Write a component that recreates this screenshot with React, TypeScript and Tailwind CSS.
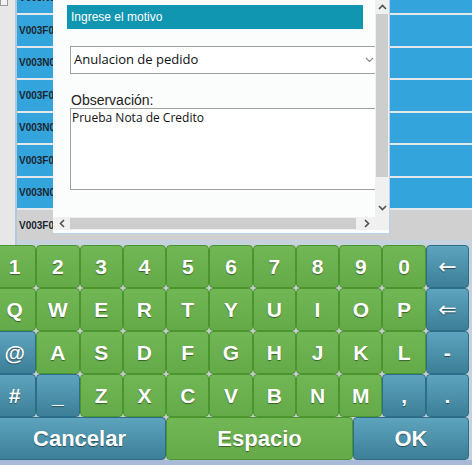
import React from 'react';

type KeyKind = 'g' | 't';

const greenKey = 'bg-linear-to-b from-[#71b755] to-[#65aa48] border-[#4b952f]';
const tealKey = 'bg-linear-to-b from-[#5ea4be] to-[#3c7f97] border-[#2c6e8a]';

const Key: React.FC<{ label: string; kind: KeyKind; className?: string; labelClass?: string }> = ({ label, kind, className = '', labelClass = '' }) => (
    <div
        className={`h-[43px] flex items-center justify-center rounded-[4px] border text-white font-bold text-[21px] [text-shadow:0_1px_1px_rgba(0,0,0,0.45)] ${kind === 'g' ? greenKey : tealKey} ${className}`}
    >
        <span className={labelClass}>{label}</span>
    </div>
);

const rows: [string, KeyKind][][] = [
    [['1', 'g'], ['2', 'g'], ['3', 'g'], ['4', 'g'], ['5', 'g'], ['6', 'g'], ['7', 'g'], ['8', 'g'], ['9', 'g'], ['0', 'g'], ['←', 't']],
    [['Q', 'g'], ['W', 'g'], ['E', 'g'], ['R', 'g'], ['T', 'g'], ['Y', 'g'], ['U', 'g'], ['I', 'g'], ['O', 'g'], ['P', 'g'], ['⇐', 't']],
    [['@', 't'], ['A', 'g'], ['S', 'g'], ['D', 'g'], ['F', 'g'], ['G', 'g'], ['H', 'g'], ['J', 'g'], ['K', 'g'], ['L', 'g'], ['-', 't']],
    [['#', 't'], ['_', 't'], ['Z', 'g'], ['X', 'g'], ['C', 'g'], ['V', 'g'], ['B', 'g'], ['N', 'g'], ['M', 'g'], [',', 't'], ['.', 't']],
];

const codes = ['V003N0012', 'V003F0012', 'V003N0013', 'V003F0013', 'V003N0014', 'V003F0014', 'V003N0015', 'V003F0015'];

const Chevron: React.FC<{ dir: 'up' | 'down' | 'left' | 'right' }> = ({ dir }) => {
    const pts = {
        up: '1,6 4.5,2.5 8,6',
        down: '1,3 4.5,6.5 8,3',
        left: '6,1 2.5,4.5 6,8',
        right: '3,1 6.5,4.5 3,8',
    }[dir];
    return (
        <svg width="9" height="9" viewBox="0 0 9 9">
            <polyline points={pts} fill="none" stroke="#505050" strokeWidth="1.6" />
        </svg>
    );
};

const App: React.FC = () => {
    return (
        <div className="w-[472px] h-[465px] overflow-hidden bg-[#e6e6e6] font-['Liberation_Sans',Arial,sans-serif] flex flex-col">
            {/* table behind the dialog */}
            <div className="relative h-[240px] flex shrink-0">
                <div className="w-[17px] shrink-0 bg-[#e7e7e7] border-r-2 border-[#b3c7de]">
                    <div className="w-[8px] h-[6px] border border-t-0 border-[#9a9a9a] bg-[#f2f2f2]" />
                </div>
                <div className="flex-1 flex flex-col gap-[2px] mt-[-17.5px] bg-[#e4e8ea]">
                    {codes.map((c, i) => (
                        <div
                            key={i}
                            className={`h-[30.5px] shrink-0 flex items-center pl-[2px] text-[10px] font-bold text-[#1b2530] ${i === codes.length - 1 ? 'bg-[#d0d0d0] h-[30px]' : 'bg-[#33a5dc]'}`}
                        >
                            {c}
                        </div>
                    ))}
                </div>

                {/* dialog */}
                <div className="absolute left-[53px] top-[-6px] w-[337px] h-[240px] bg-[#fbfcfc] border-r border-b border-[#b7d3ea] flex flex-col">
                    <div className="flex flex-1 min-h-0">
                        <div className="flex-1 overflow-hidden pt-[11px]">
                            <div className="ml-[14px] w-[296px] h-[24px] bg-[#1196b1] text-white text-[12px] flex items-center pl-[4px]">
                                Ingrese el motivo
                            </div>
                            <div className="ml-[17px] mt-[17px] w-[320px] h-[28px] border border-[#a0a0a0] bg-white flex items-center pl-[3px] font-['Open_Sans',sans-serif] text-[13px] text-[#111]">
                                <span className="flex-1">Anulacion de pedido</span>
                                <span className="mr-[15px] text-[#777]">
                                    <svg width="9" height="6" viewBox="0 0 9 6"><polyline points="1,1 4.5,4.5 8,1" fill="none" stroke="#888" strokeWidth="1.2" /></svg>
                                </span>
                            </div>
                            <div className="ml-[18px] mt-[18px] text-[14px] leading-[16px] text-[#222]">Observación:</div>
                            <div className="ml-[17px] w-[320px] h-[82px] border border-[#a0a0a0] bg-white pl-[1px] pt-[1px] font-['Open_Sans',sans-serif] text-[12px] leading-[15px] text-[#111]">
                                Prueba Nota de Credito
                            </div>
                        </div>
                        {/* vertical scrollbar */}
                        <div className="w-[14px] bg-[#f0f0f0] flex flex-col items-center pt-[9px]">
                            <Chevron dir="up" />
                            <div className="w-[12px] h-[163px] bg-[#cdcdcd] mt-[2px]" />
                            <div className="mt-auto mb-[5px]"><Chevron dir="down" /></div>
                        </div>
                    </div>
                    {/* horizontal scrollbar */}
                    <div className="h-[13px] flex items-center bg-[#f0f0f0] mb-[3px]">
                        <div className="w-[17px] flex justify-center pl-[2px]"><Chevron dir="left" /></div>
                        <div className="w-[286px] h-[11px] bg-[#cdcdcd]" />
                        <div className="w-[20px] flex justify-center"><Chevron dir="right" /></div>
                        <div className="flex-1 h-full bg-[#f0f0f0]" />
                    </div>
                </div>
            </div>

            {/* keyboard */}
            <div className="flex-1 flex flex-col bg-[#c6d2de] overflow-hidden">
                <div className="h-[5px] flex">
                    <div className="w-[17px] bg-[#e7e7e7] border-r-2 border-[#b3c7de]" />
                </div>
                <div className="w-[476px] ml-[-7px] flex flex-col bg-[#c9cdd1]">
                    {rows.map((row, r) => (
                        <div key={r} className="grid grid-cols-11">
                            {row.map(([label, kind], i) => (
                                <Key
                                    key={i}
                                    label={label}
                                    kind={kind}
                                    labelClass={label === '←' || label === '⇐' ? "font-['DejaVu_Sans'] font-normal text-[22px]" : ''}
                                />
                            ))}
                        </div>
                    ))}
                    <div className="flex">
                        <Key label="Cancelar" kind="t" className="w-[173px] text-[22px]" />
                        <Key label="Espacio" kind="g" className="w-[187px] text-[22px]" />
                        <Key label="OK" kind="t" className="w-[116px] text-[22px]" />
                    </div>
                </div>
                <div className="flex-1 bg-[#a9b9d8]" />
            </div>
        </div>
    );
};

export default App;
